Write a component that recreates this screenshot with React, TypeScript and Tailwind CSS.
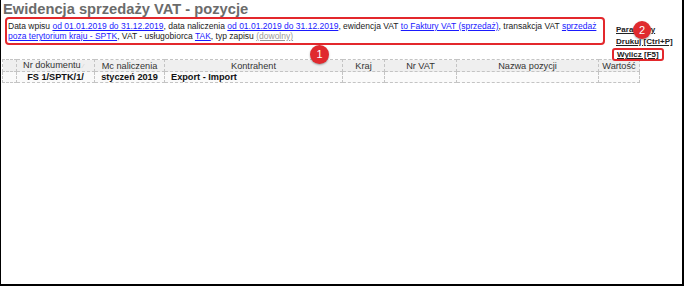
export default function App() {
  const link = "text-[#1a1aff] underline";
  const cols = [
    { w: "w-[14px]", label: "" },
    { w: "w-[78px]", label: "Nr dokumentu" },
    { w: "w-[70px]", label: "Mc naliczenia" },
    { w: "w-[178px]", label: "Kontrahent" },
    { w: "w-[42px]", label: "Kraj" },
    { w: "w-[72px]", label: "Nr VAT" },
    { w: "w-[142px]", label: "Nazwa pozycji" },
    { w: "w-[41px]", label: "Wartość" },
  ];
  const cell = "border border-dashed border-[#c4c4c4] p-0 whitespace-nowrap";

  return (
    <div className="relative h-[286px] w-[684px] border-b-2 border-l border-r-2 border-black bg-white font-['Liberation_Sans',Arial,sans-serif]">
      <div className="pl-[2px] pt-[1px] text-[14.7px] font-bold leading-[16px] text-[#6b6b6b]">
        Ewidencja sprzedaży VAT - pozycje
      </div>

      <div className="flex items-start">
        <div className="ml-[4px] h-[28px] w-[600px] rounded-[4px] border-2 border-[#e3282c] px-[1px] pt-[2px] text-[8.5px] leading-[10px] whitespace-nowrap text-[#222]">
          Data wpisu <span className={link}>od 01.01.2019 do 31.12.2019</span>, data naliczenia{" "}
          <span className={link}>od 01.01.2019 do 31.12.2019</span>, ewidencja VAT{" "}
          <span className={link}>to Faktury VAT (sprzedaż)</span>, transakcja VAT{" "}
          <span className={link}>
            sprzedaż
            <br />
            poza terytorium kraju - SPTK
          </span>
          , VAT - usługobiorca <span className={link}>TAK</span>, typ zapisu{" "}
          <span className="text-[#999] underline">(dowolny)</span>
        </div>

        <div className="ml-[7px] mt-[7px] flex flex-col items-start whitespace-nowrap text-[8px] font-bold leading-[11.5px] text-[#222]">
          <span className="ml-[4px] underline">Parametry</span>
          <span className="ml-[4px] underline">Drukuj [Ctrl+P]</span>
          <span className="mt-[1px] rounded-[3px] border-2 border-[#e3282c] px-[3px] leading-[9px] underline">Wylicz [F5]</span>
        </div>
      </div>

      <table className="ml-[1px] mt-[-2px] border-collapse text-[9.2px] leading-[10px] text-[#333]">
        <thead>
          <tr className="bg-[#efefef]">
            {cols.map((c, i) => (
              <th
                key={i}
                className={`${c.w} h-[11px] ${cell} font-normal ${
                  i === 1 ? "text-left pl-[6px]" : "text-center"
                }`}
              >
                {c.label}
                {i === 1 && <span className="ml-[2px] text-[6px] text-[#c8c8c8]">⁄</span>}
              </th>
            ))}
          </tr>
        </thead>
        <tbody>
          <tr className="bg-[#fafafa] font-bold text-[#111]">
            <td className={`h-[11px] ${cell}`} />
            <td className={`${cell} text-center`}>FS 1/SPTK/1/</td>
            <td className={`${cell} text-center`}>styczeń 2019</td>
            <td className={`${cell} pl-[6px] text-left`}>Export - Import</td>
            <td className={cell} />
            <td className={cell} />
            <td className={cell} />
            <td className={cell} />
          </tr>
        </tbody>
      </table>

      <div className="absolute left-[309px] top-[45px] flex h-[19px] w-[19px] items-center justify-center rounded-full bg-[#e02a2e] text-[11px] text-white shadow-[0_1px_2px_rgba(0,0,0,0.35)]">
        1
      </div>
      <div className="absolute left-[632px] top-[21px] flex h-[18px] w-[18px] items-center justify-center rounded-full bg-[#e02a2e] text-[11px] text-white shadow-[0_1px_2px_rgba(0,0,0,0.35)]">
        2
      </div>
    </div>
  );
}
